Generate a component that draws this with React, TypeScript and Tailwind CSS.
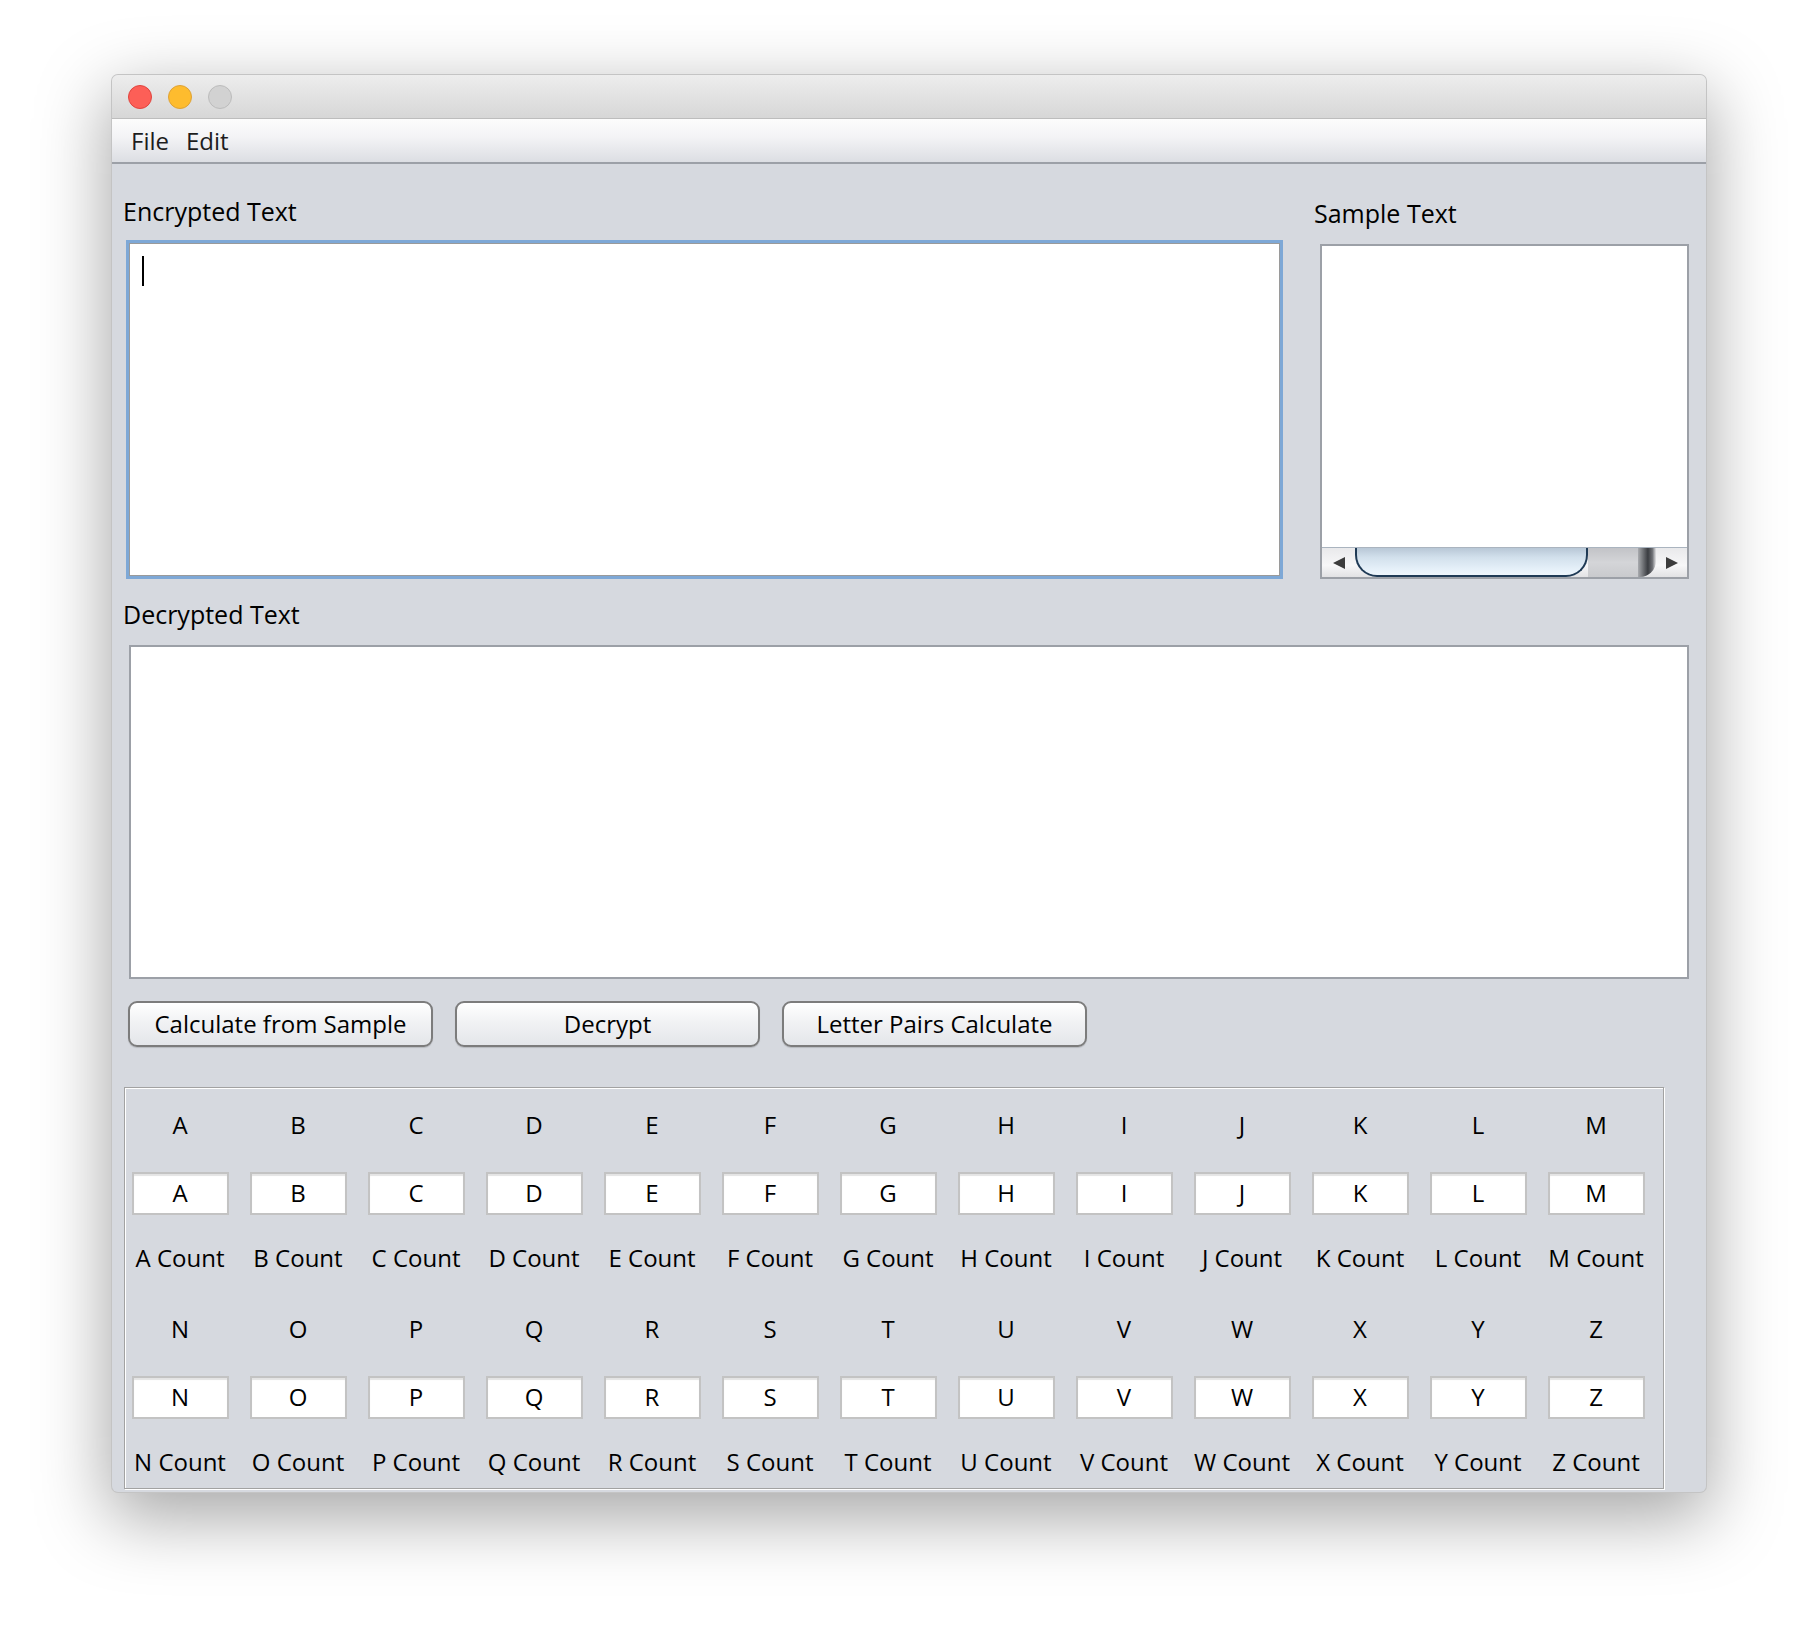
import React from "react";

const ROW1 = "ABCDEFGHIJKLM".split("");
const ROW2 = "NOPQRSTUVWXYZ".split("");

function LetterGroup({ letters }: { letters: string[] }) {
  return (
    <div className="mb-[6px]">
      <div className="grid h-[68px] grid-cols-[repeat(13,104px)] gap-x-[14px] items-center justify-items-center">
        {letters.map((l) => (
          <div key={l} className="text-[24px] leading-[24px] text-black">
            {l}
          </div>
        ))}
      </div>
      <div className="grid h-[68px] grid-cols-[repeat(13,104px)] gap-x-[14px] items-center justify-items-center">
        {letters.map((l) => (
          <div
            key={l}
            className="flex h-[43px] w-[97px] items-center justify-center border-2 border-[#c3c3c3] bg-white text-[24px] leading-[24px] text-black shadow-[inset_0_2px_1px_#e4e4e4]"
          >
            {l}
          </div>
        ))}
      </div>
      <div className="grid h-[62px] grid-cols-[repeat(13,104px)] gap-x-[14px] items-center justify-items-center">
        {letters.map((l) => (
          <div key={l} className="whitespace-nowrap text-[24px] leading-[24px] text-black">
            {l} Count
          </div>
        ))}
      </div>
    </div>
  );
}

function Button({ label }: { label: string }) {
  return (
    <div className="flex h-[46px] w-[305px] items-center justify-center rounded-[9px] border-2 border-[#7c7c7c] bg-[linear-gradient(#ffffff,#f1f2f4_45%,#e4e6ea)] text-[24px] leading-[24px] text-black shadow-[0_1px_1px_rgba(0,0,0,0.15)]">
      {label}
    </div>
  );
}

function ScrollBar() {
  return (
    <div className="flex h-[30px] w-full border-t border-[#aab4bf] bg-[linear-gradient(#e9e9eb,#f7f7f8_60%,#e2e2e4)]">
      <div className="flex w-[33px] items-center justify-center">
        <svg width="14" height="14" viewBox="0 0 14 14">
          <polygon points="1,7 13,1 13,13" fill="#3c3c3c" />
        </svg>
      </div>
      <div className="h-[29px] w-[233px] rounded-b-[22px] border-2 border-t-0 border-[#1f3a55] bg-[linear-gradient(#b8c7d6,#d2e0ec_35%,#e4eff8_75%,#eef6fc)]" />
      <div className="w-[50px] bg-[linear-gradient(#c2c3c7,#d4d5d8_50%,#c9cacd)]" />
      <div className="w-[18px] rounded-br-[16px] bg-[linear-gradient(90deg,#a9abaf,#3a3c41_55%,#6f7176_80%,#e4e4e6)]" />
      <div className="flex flex-1 items-center justify-center">
        <svg width="14" height="14" viewBox="0 0 14 14">
          <polygon points="13,7 1,1 1,13" fill="#3c3c3c" />
        </svg>
      </div>
    </div>
  );
}

export default function App() {
  return (
    <div
      className="h-[1640px] w-[1818px] bg-white pl-[112px] pt-[75px] font-medium"
      style={{ fontFamily: '"Open Sans", "DejaVu Sans", sans-serif' }}
    >
      <div className="flex h-[1417px] w-[1594px] flex-col overflow-hidden rounded-[6px] bg-[#d6d9df] shadow-[0_0_0_1px_#c4c4c4,0_22px_70px_4px_rgba(0,0,0,0.35)]">
        {/* title bar */}
        <div className="flex h-[44px] shrink-0 items-center gap-[16px] border-b border-[#bdbdbd] bg-[linear-gradient(#ededed,#d7d7d7)] pl-[16px]">
          <div className="h-[24px] w-[24px] rounded-full border border-[#e0443e] bg-[#fd5f57]" />
          <div className="h-[24px] w-[24px] rounded-full border border-[#dea236] bg-[#febc2e]" />
          <div className="h-[24px] w-[24px] rounded-full border border-[#bcbcbc] bg-[#d2d2d2]" />
        </div>
        {/* menu bar */}
        <div className="flex h-[45px] shrink-0 items-center gap-[17px] border-b-2 border-[#9ca0a7] bg-[linear-gradient(#fcfcfc,#f4f4f6_40%,#dcdee3)] pl-[19px] text-[24px] leading-[24px] text-[#1d1d1d]">
          <span>File</span>
          <span>Edit</span>
        </div>
        {/* content */}
        <div className="flex flex-col px-[17px] pt-[35px]">
          <div className="flex gap-[40px]">
            <div className="flex w-[1151px] flex-col">
              <div className="-ml-[6px] text-[25px] leading-[25px] text-black">Encrypted Text</div>
              <div className="relative mt-[19px] h-[333px] w-[1151px] border border-[#9a9a9a] bg-white shadow-[0_0_0_3px_#7ea8d6]">
                <div className="absolute left-[12px] top-[12px] h-[30px] w-[2px] bg-black" />
              </div>
            </div>
            <div className="mt-[2px] flex w-[369px] flex-col">
              <div className="-ml-[6px] text-[25px] leading-[25px] text-black">Sample Text</div>
              <div className="mt-[18px] flex h-[335px] w-[369px] flex-col border-2 border-[#9ca0a7] bg-white">
                <div className="flex-1" />
                <ScrollBar />
              </div>
            </div>
          </div>
          <div className="-ml-[6px] mt-[23px] text-[25px] leading-[25px] text-black">Decrypted Text</div>
          <div className="mt-[18px] h-[334px] w-[1560px] border-2 border-[#9ca0a7] bg-white" />
          <div className="-ml-[1px] mt-[22px] flex gap-[22px]">
            <Button label="Calculate from Sample" />
            <Button label="Decrypt" />
            <Button label="Letter Pairs Calculate" />
          </div>
          <div className="-ml-[5px] mt-[40px] h-[402px] w-[1540px] overflow-hidden border border-[#a2a2a2] pl-[3px] pt-[3px] shadow-[inset_1px_1px_0_#ffffff,1px_1px_0_#ffffff]">
            <LetterGroup letters={ROW1} />
            <LetterGroup letters={ROW2} />
          </div>
        </div>
      </div>
    </div>
  );
}
